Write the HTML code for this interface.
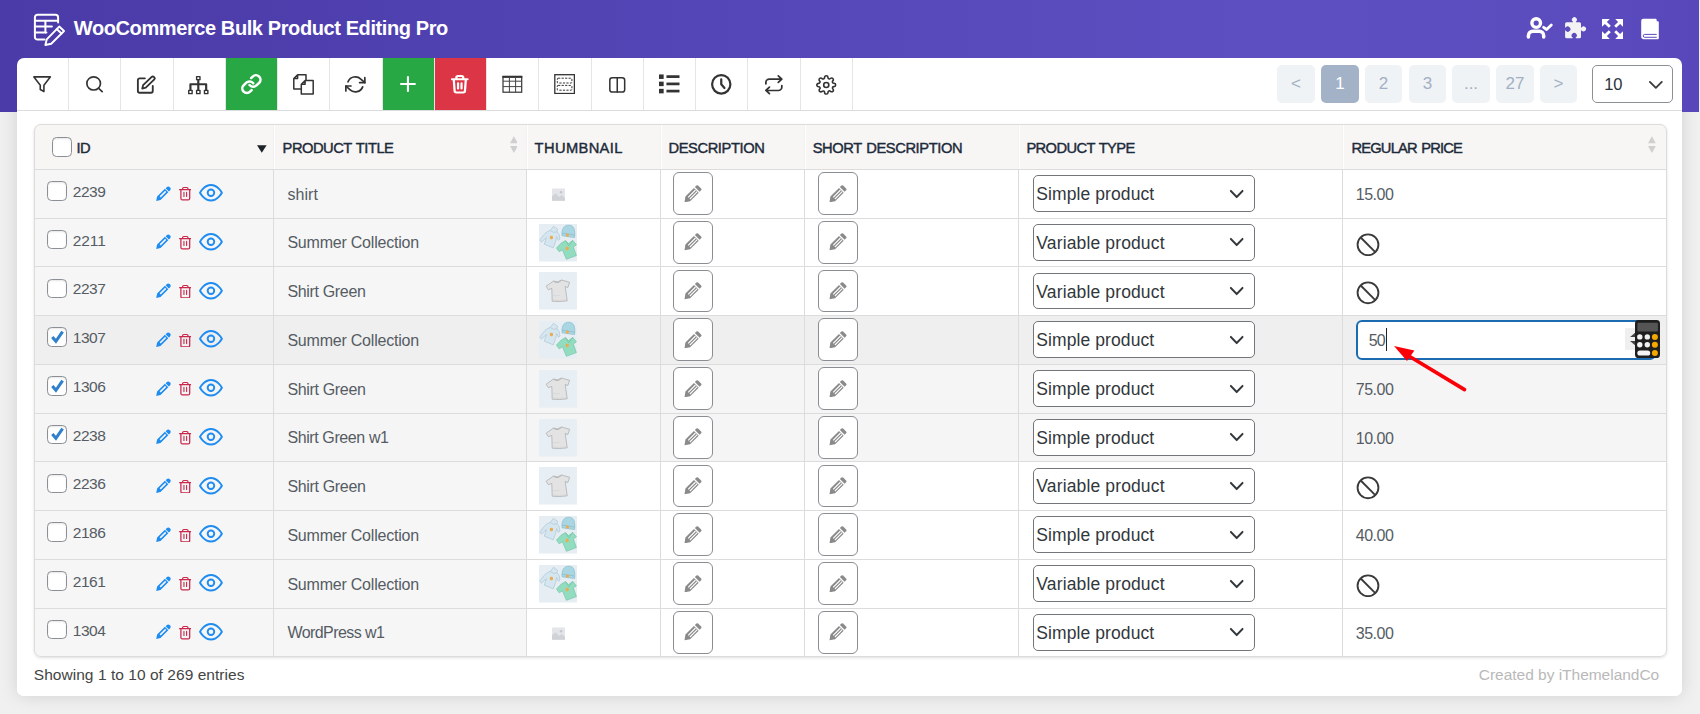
<!DOCTYPE html>
<html lang="en"><head><meta charset="utf-8"><title>WooCommerce Bulk Product Editing Pro</title>
<style>

*{box-sizing:border-box;margin:0;padding:0}
html,body{width:1700px;height:714px;overflow:hidden;background:#f0f0f1}
body{font-family:"Liberation Sans",sans-serif;-webkit-font-smoothing:antialiased}
#root{position:relative;width:1700px;height:714px;overflow:hidden}
#root>span{display:block}

</style></head>
<body>
<div id="root">
<div style="position:absolute;left:17px;top:58px;width:1665px;height:638px;background:#fff;border-radius:7px;box-shadow:0 0 18px rgba(0,0,0,.13);"></div>
<div style="position:absolute;left:0px;top:0px;width:1699px;height:111.6px;background:linear-gradient(90deg,#4a3ba8 0%,#4d3eac 15%,#5243b3 32%,#5849ba 52%,#5d4fc1 75%,#5c4dbf 90%,#5747bb 100%);"></div>
<div style="position:absolute;left:17px;top:58px;width:1665px;height:638px;background:#fff;border-radius:7px;"></div>
<svg style="position:absolute;left:32px;top:12px;" width="35" height="35" viewBox="0 0 35 35">
<g fill="none" stroke="#fff" stroke-width="2" stroke-linecap="round" stroke-linejoin="round">
<path d="M12.5 27.600H5.5a2.600 2.600 0 0 1-2.600-2.600V5.400A2.600 2.600 0 0 1 5.500 2.800h18a2.600 2.600 0 0 1 2.600 2.600V10.500"/>
<path d="M2.9 8.8h23.2M2.9 14.6h17M2.9 20.6h11.5M13.4 8.8v12"/>
<path d="M27.200 14.600l4.800 4.500-12.800 12.700-5.800 1.300 1.300-5.700z"/>
<path d="M24.700 17.100l4.800 4.500"/>
</g></svg>
<span style="position:absolute;top:17px;font-size:20px;line-height:22px;height:22px;font-weight:700;color:#fff;white-space:pre;left:73.80px;letter-spacing:-0.402px;">WooCommerce Bulk Product Editing Pro</span>
<svg style="position:absolute;left:1524px;top:15px;" width="30" height="26" viewBox="0 0 30 26">
<g fill="none" stroke="#fff" stroke-linecap="round" stroke-linejoin="round">
<circle cx="12.2" cy="8.1" r="4.3" stroke-width="3.4"/>
<path d="M4.400 22.100v-1.400a4.500 4.500 0 0 1 4.500-4.500h6.300a4.500 4.500 0 0 1 4.500 4.500v1.400" stroke-width="3.500"/>
<path d="M19.600 12.300l3 2.200 4.700-4.600" stroke-width="2.800"/>
</g></svg>
<svg style="position:absolute;left:1563px;top:15px;" width="26" height="26" viewBox="0 0 26 26">
<path fill="#f3f3f3" d="M3.600 7.250H9.900V6.700A2.450 2.450 0 1 1 12.900 6.700V7.250H16.500A1.500 1.500 0 0 1 18 8.750V12.400H18.600A2.450 2.450 0 1 1 18.600 15.400H18V21.700A1.500 1.500 0 0 1 16.500 23.200H12.700V22.600A2.580 2.580 0 1 0 9.700 22.600V23.200H3.600A1.500 1.500 0 0 1 2.100 21.700V15.600H2.700A2.580 2.580 0 1 0 2.700 12.600H2.100V8.750A1.500 1.500 0 0 1 3.600 7.250z"/></svg>
<svg style="position:absolute;left:1601px;top:18px;" width="23" height="22" viewBox="0 0 23 22">
<g fill="#fff"><path d="M1 1h7.800L5.900 3.900l3.900 3.900-2 2-3.900-3.900L1 8.800z"/><path d="M22 1v7.800L19.100 5.900l-3.900 3.900-2-2 3.900-3.900L14.200 1z"/><path d="M1 21v-7.800L3.900 16.100l3.900-3.900 2 2-3.900 3.900L8.800 21z"/><path d="M22 21h-7.800l2.900-2.900-3.900-3.900 2-2 3.900 3.900L22 13.200z"/></g></svg>
<svg style="position:absolute;left:1640px;top:18px;" width="21" height="23" viewBox="0 0 21 23">
<path fill="#fff" d="M3.200 .800h12.300a1.200 1.200 0 0 1 1.200 1.200v1.300h1.200a.900.900 0 0 1 .900.900v16a1.100 1.100 0 0 1-1.100 1.100H4A2.800 2.800 0 0 1 1.200 18.500V2.800A2 2 0 0 1 3.200 .800z"/>
<path fill="none" stroke="#5a4bbd" stroke-width="1" d="M16.700 16.400H4.700a1.450 1.450 0 0 0 0 2.900h12"/></svg>
<div style="position:absolute;left:17px;top:110px;width:1665px;height:1px;background:#dcdcde;"></div>
<div style="position:absolute;left:68px;top:58px;width:1px;height:52px;background:#e5e5e5;"></div>
<div style="position:absolute;left:120px;top:58px;width:1px;height:52px;background:#e5e5e5;"></div>
<div style="position:absolute;left:173px;top:58px;width:1px;height:52px;background:#e5e5e5;"></div>
<div style="position:absolute;left:225px;top:58px;width:1px;height:52px;background:#e5e5e5;"></div>
<div style="position:absolute;left:226px;top:58px;width:51px;height:52px;background:#28a745;"></div>
<div style="position:absolute;left:277px;top:58px;width:1px;height:52px;background:#e5e5e5;"></div>
<div style="position:absolute;left:329px;top:58px;width:1px;height:52px;background:#e5e5e5;"></div>
<div style="position:absolute;left:382px;top:58px;width:1px;height:52px;background:#e5e5e5;"></div>
<div style="position:absolute;left:383px;top:58px;width:51px;height:52px;background:#28a745;"></div>
<div style="position:absolute;left:434px;top:58px;width:1px;height:52px;background:#e5e5e5;"></div>
<div style="position:absolute;left:435px;top:58px;width:51px;height:52px;background:#dc3545;"></div>
<div style="position:absolute;left:486px;top:58px;width:1px;height:52px;background:#e5e5e5;"></div>
<div style="position:absolute;left:538px;top:58px;width:1px;height:52px;background:#e5e5e5;"></div>
<div style="position:absolute;left:591px;top:58px;width:1px;height:52px;background:#e5e5e5;"></div>
<div style="position:absolute;left:643px;top:58px;width:1px;height:52px;background:#e5e5e5;"></div>
<div style="position:absolute;left:695px;top:58px;width:1px;height:52px;background:#e5e5e5;"></div>
<div style="position:absolute;left:747px;top:58px;width:1px;height:52px;background:#e5e5e5;"></div>
<div style="position:absolute;left:800px;top:58px;width:1px;height:52px;background:#e5e5e5;"></div>
<div style="position:absolute;left:852px;top:58px;width:1px;height:52px;background:#e5e5e5;"></div>
<svg style="position:absolute;left:32.90px;top:76.20px;overflow:visible" width="18.20" height="16.70" viewBox="2 3 20 17.2" preserveAspectRatio="none"><g fill="none" stroke="#333" stroke-width="1.75" stroke-linecap="round" stroke-linejoin="round" ><path d="M3 4h18l-7 8.500v6.500l-4-2.200v-4.300z"/></g></svg>
<svg style="position:absolute;left:85.80px;top:76.40px;overflow:visible" width="17.00" height="16.50" viewBox="1 1 20 20" preserveAspectRatio="none"><g fill="none" stroke="#333" stroke-width="2" stroke-linecap="round" stroke-linejoin="round" ><circle cx="10" cy="10" r="8"/><path d="M15.800 15.800l4.200 4.200"/></g></svg>
<svg style="position:absolute;left:137.00px;top:75.80px;overflow:visible" width="18.40" height="17.60" viewBox="2 1.2 21 20.8" preserveAspectRatio="none"><g fill="none" stroke="#333" stroke-width="2.1" stroke-linecap="round" stroke-linejoin="round" ><path d="M11 4H5a2 2 0 0 0-2 2v13a2 2 0 0 0 2 2h13a2 2 0 0 0 2-2v-6"/><path d="M18.500 2.500a2.120 2.120 0 0 1 3 3L12 15l-4 1 1-4z"/></g></svg>
<svg style="position:absolute;left:188.30px;top:75.80px;overflow:visible" width="20.60" height="18.30" viewBox="1 1 22 22" preserveAspectRatio="none"><g fill="none" stroke="#333" stroke-width="1.5" stroke-linecap="round" stroke-linejoin="round" stroke-linejoin="miter" stroke-linecap="butt"><rect x="10.200" y="1.800" width="3.600" height="3.600"/><rect x="1.800" y="18.200" width="3.600" height="4"/><rect x="10.200" y="18.200" width="3.600" height="4"/><rect x="18.600" y="18.200" width="3.600" height="4"/><path d="M12 6v11.500M3.600 17.500v-6.500h16.800v6.500" stroke-width="2.300"/></g></svg>
<svg style="position:absolute;left:240.80px;top:74.20px;overflow:visible" width="20.80" height="20.20" viewBox="0.6 0.6 22.799999999999997 22.799999999999997" preserveAspectRatio="none"><g fill="none" stroke="#fff" stroke-width="2.8" stroke-linecap="round" stroke-linejoin="round" ><path d="M10 13a5 5 0 0 0 7.540.540l3-3a5 5 0 0 0-7.070-7.070l-1.720 1.710"/><path d="M14 11a5 5 0 0 0-7.540-.540l-3 3a5 5 0 0 0 7.070 7.070l1.710-1.710"/></g></svg>
<svg style="position:absolute;left:292.60px;top:73.50px;overflow:visible" width="21.00" height="20.70" viewBox="0 0 21 20.7" preserveAspectRatio="none"><g fill="none" stroke="#333" stroke-width="1.5" stroke-linecap="round" stroke-linejoin="round" stroke-linejoin="miter"><path d="M4.600.800h8.400v5.800M4.600.800L.800 4.600v10.300h7.500M.800 4.600h3.800V.800"/><path d="M12.100 6.500h8.100v13.400H8.300V10.300zM8.300 10.300h3.800V6.500" fill="#fff"/></g></svg>
<svg style="position:absolute;left:345.30px;top:76.00px;overflow:visible" width="20.70" height="16.70" viewBox="0 2 24 20" preserveAspectRatio="none"><g fill="none" stroke="#333" stroke-width="2" stroke-linecap="round" stroke-linejoin="round" ><path d="M23 4v6h-6M1 20v-6h6"/><path d="M3.510 9a9 9 0 0 1 14.850-3.360L23 10M1 14l4.640 4.360A9 9 0 0 0 20.490 15"/></g></svg>
<svg style="position:absolute;left:400.80px;top:77.40px;overflow:visible" width="13.90" height="14.00" viewBox="5 5 14 14" preserveAspectRatio="none"><g fill="none" stroke="#fff" stroke-width="2.1" stroke-linecap="round" stroke-linejoin="round" stroke-linecap="butt"><path d="M12 5v14M5 12h14"/></g></svg>
<svg style="position:absolute;left:451.30px;top:75.40px;overflow:visible" width="17.60" height="18.50" viewBox="1.8 0.8 20.4 22.4" preserveAspectRatio="none"><g fill="none" stroke="#fff" stroke-width="2.6" stroke-linecap="round" stroke-linejoin="round" ><path d="M3 6h18M19 6l-1 14a2 2 0 0 1-2 2H8a2 2 0 0 1-2-2L5 6M8 6V4a2 2 0 0 1 2-2h4a2 2 0 0 1 2 2v2M10 11v6M14 11v6"/></g></svg>
<svg style="position:absolute;left:502px;top:75px" width="21" height="19" viewBox="0 0 21 19"><g fill="none" stroke="#333" stroke-width="1.200"><rect x="1" y="1.400" width="18.700" height="15.800"/><path d="M.400 1.900h19.900" stroke-width="2"/><path d="M1 6.200h18.700M1 11.600h18.700M7.400 2v15M13.600 2v15" stroke="#444" stroke-width="1"/></g></svg>
<svg style="position:absolute;left:554px;top:74px" width="21" height="20" viewBox="0 0 21 20"><g fill="none" stroke="#333"><rect x=".800" y=".700" width="19.600" height="18.800" stroke-width="1.300"/><rect x="3.300" y="4.200" width="14.600" height="4.800" rx=".800" stroke-width="1" stroke-dasharray="2.200 1.300"/><rect x="3.300" y="11.400" width="14.600" height="4.800" rx=".800" stroke-width="1" stroke-dasharray="2.200 1.300"/></g></svg>
<svg style="position:absolute;left:608.70px;top:77.00px;overflow:visible" width="16.50" height="15.80" viewBox="2 2 20 20" preserveAspectRatio="none"><g fill="none" stroke="#333" stroke-width="1.85" stroke-linecap="round" stroke-linejoin="round" ><rect x="3" y="3" width="18" height="18" rx="3"/><path d="M12 3v18"/></g></svg>
<svg style="position:absolute;left:658.80px;top:74.20px;overflow:visible" width="20.50" height="19.80" viewBox="1 1 22 22" preserveAspectRatio="none"><g fill="#333" stroke="none" stroke-width="0" stroke-linecap="round" stroke-linejoin="round" ><rect x="1" y="1.500" width="5" height="5"/><rect x="1" y="9.500" width="5" height="5"/><rect x="1" y="17.500" width="5" height="5"/><rect x="9" y="2.400" width="14" height="3"/><rect x="9" y="10.500" width="14" height="3"/><rect x="9" y="18.500" width="14" height="3"/></g></svg>
<svg style="position:absolute;left:711.30px;top:73.50px;overflow:visible" width="20.50" height="20.70" viewBox="0.8 0.8 22.4 22.4" preserveAspectRatio="none"><g fill="none" stroke="#333" stroke-width="2.4" stroke-linecap="round" stroke-linejoin="round" ><circle cx="12" cy="12" r="10"/><path d="M12 6.500V12l3.500 4"/></g></svg>
<svg style="position:absolute;left:764.70px;top:74.70px;overflow:visible" width="17.70" height="19.50" viewBox="2 0 20 24" preserveAspectRatio="none"><g fill="none" stroke="#333" stroke-width="2" stroke-linecap="round" stroke-linejoin="round" ><path d="M17 1l4 4-4 4M3 11V9a4 4 0 0 1 4-4h14M7 23l-4-4 4-4M21 13v2a4 4 0 0 1-4 4H3"/></g></svg>
<svg style="position:absolute;left:815.80px;top:74.60px;overflow:visible" width="20.50" height="19.90" viewBox="0 0 24 24" preserveAspectRatio="none"><g fill="none" stroke="#333" stroke-width="1.9" stroke-linecap="round" stroke-linejoin="round" ><circle cx="12" cy="12" r="3"/><path d="M19.400 15a1.650 1.650 0 0 0 .330 1.820l.060.060a2 2 0 0 1 0 2.830 2 2 0 0 1-2.830 0l-.060-.060a1.650 1.650 0 0 0-1.820-.330 1.650 1.650 0 0 0-1 1.510V21a2 2 0 0 1-2 2 2 2 0 0 1-2-2v-.090A1.650 1.650 0 0 0 9 19.400a1.650 1.650 0 0 0-1.820.330l-.060.060a2 2 0 0 1-2.830 0 2 2 0 0 1 0-2.830l.060-.060a1.650 1.650 0 0 0 .330-1.820 1.650 1.650 0 0 0-1.510-1H3a2 2 0 0 1-2-2 2 2 0 0 1 2-2h.090A1.650 1.650 0 0 0 4.600 9a1.650 1.650 0 0 0-.330-1.820l-.060-.060a2 2 0 0 1 0-2.830 2 2 0 0 1 2.830 0l.060.060a1.650 1.650 0 0 0 1.820.330H9a1.650 1.650 0 0 0 1-1.510V3a2 2 0 0 1 2-2 2 2 0 0 1 2 2v.090a1.650 1.650 0 0 0 1 1.510 1.650 1.650 0 0 0 1.820-.330l.060-.060a2 2 0 0 1 2.830 0 2 2 0 0 1 0 2.830l-.060.060a1.650 1.650 0 0 0-.330 1.820V9a1.650 1.650 0 0 0 1.510 1H21a2 2 0 0 1 2 2 2 2 0 0 1-2 2h-.090a1.650 1.650 0 0 0-1.510 1z"/></g></svg>
<div style="position:absolute;left:1277px;top:65px;width:38px;height:38px;background:#eff3f6;border-radius:5px;"></div>
<div style="position:absolute;left:1277px;top:65px;width:38px;height:38px;line-height:37px;text-align:center;font-size:17px;color:#a3afc2">&lt;</div>
<div style="position:absolute;left:1321px;top:65px;width:38px;height:38px;background:#a4b2c8;border-radius:5px;"></div>
<div style="position:absolute;left:1321px;top:65px;width:38px;height:38px;line-height:37px;text-align:center;font-size:17px;color:#fff">1</div>
<div style="position:absolute;left:1365px;top:65px;width:37px;height:38px;background:#eff3f6;border-radius:5px;"></div>
<div style="position:absolute;left:1365px;top:65px;width:37px;height:38px;line-height:37px;text-align:center;font-size:17px;color:#a3afc2">2</div>
<div style="position:absolute;left:1409px;top:65px;width:37px;height:38px;background:#eff3f6;border-radius:5px;"></div>
<div style="position:absolute;left:1409px;top:65px;width:37px;height:38px;line-height:37px;text-align:center;font-size:17px;color:#a3afc2">3</div>
<div style="position:absolute;left:1452px;top:65px;width:38px;height:38px;background:#eff3f6;border-radius:5px;"></div>
<div style="position:absolute;left:1452px;top:65px;width:38px;height:38px;line-height:37px;text-align:center;font-size:17px;color:#a3afc2">...</div>
<div style="position:absolute;left:1496px;top:65px;width:38px;height:38px;background:#eff3f6;border-radius:5px;"></div>
<div style="position:absolute;left:1496px;top:65px;width:38px;height:38px;line-height:37px;text-align:center;font-size:17px;color:#a3afc2">27</div>
<div style="position:absolute;left:1540px;top:65px;width:37px;height:38px;background:#eff3f6;border-radius:5px;"></div>
<div style="position:absolute;left:1540px;top:65px;width:37px;height:38px;line-height:37px;text-align:center;font-size:17px;color:#a3afc2">&gt;</div>
<div style="position:absolute;left:1592.2px;top:64.8px;width:80.6px;height:37.9px;background:#fff;border:1px solid #8c8f94;border-radius:5px;"></div>
<span style="position:absolute;top:75px;font-size:16.5px;line-height:18px;height:18px;font-weight:400;color:#2c3338;white-space:pre;left:1604.20px;">10</span>
<svg style="position:absolute;left:1649.30px;top:81.00px;overflow:visible" width="13.70" height="7.70" viewBox="2.8 6.8 18.4 10.399999999999999" preserveAspectRatio="none"><g fill="none" stroke="#3c3c3c" stroke-width="2.5" stroke-linecap="round" stroke-linejoin="round" stroke-linecap="butt" stroke-linejoin="miter"><path d="M4 8l8 8 8-8"/></g></svg>
<div style="position:absolute;left:34px;top:124px;width:1633px;height:533px;background:#fff;border-radius:7px;box-shadow:0 1px 3px rgba(0,0,0,.13);"></div>
<div style="position:absolute;left:34px;top:124px;width:1633px;height:45px;background:#f7f6f5;border-radius:7px 7px 0 0;"></div>
<div style="position:absolute;left:34px;top:169px;width:492px;height:49px;background:#f6f6f6;"></div>
<div style="position:absolute;left:34px;top:218px;width:492px;height:48px;background:#f6f6f6;"></div>
<div style="position:absolute;left:34px;top:266px;width:492px;height:49px;background:#f6f6f6;"></div>
<div style="position:absolute;left:34px;top:315px;width:1633px;height:49px;background:#efefef;"></div>
<div style="position:absolute;left:34px;top:364px;width:1633px;height:49px;background:#f5f5f5;"></div>
<div style="position:absolute;left:34px;top:413px;width:1633px;height:48px;background:#f5f5f5;"></div>
<div style="position:absolute;left:34px;top:461px;width:492px;height:49px;background:#f6f6f6;"></div>
<div style="position:absolute;left:34px;top:510px;width:492px;height:49px;background:#f6f6f6;"></div>
<div style="position:absolute;left:34px;top:559px;width:492px;height:49px;background:#f6f6f6;"></div>
<div style="position:absolute;left:34px;top:608px;width:492px;height:48px;background:#f6f6f6;border-radius:0 0 0 7px;"></div>
<div style="position:absolute;left:34px;top:169px;width:1633px;height:1px;background:#dcdcdc;"></div>
<div style="position:absolute;left:34px;top:218px;width:1633px;height:1px;background:#dcdcdc;"></div>
<div style="position:absolute;left:34px;top:266px;width:1633px;height:1px;background:#dcdcdc;"></div>
<div style="position:absolute;left:34px;top:315px;width:1633px;height:1px;background:#dcdcdc;"></div>
<div style="position:absolute;left:34px;top:364px;width:1633px;height:1px;background:#dcdcdc;"></div>
<div style="position:absolute;left:34px;top:413px;width:1633px;height:1px;background:#dcdcdc;"></div>
<div style="position:absolute;left:34px;top:461px;width:1633px;height:1px;background:#dcdcdc;"></div>
<div style="position:absolute;left:34px;top:510px;width:1633px;height:1px;background:#dcdcdc;"></div>
<div style="position:absolute;left:34px;top:559px;width:1633px;height:1px;background:#dcdcdc;"></div>
<div style="position:absolute;left:34px;top:608px;width:1633px;height:1px;background:#dcdcdc;"></div>
<div style="position:absolute;left:273px;top:125px;width:1px;height:44px;background:#f2f1f0;"></div>
<div style="position:absolute;left:274px;top:125px;width:1px;height:44px;background:#fff;"></div>
<div style="position:absolute;left:273px;top:169px;width:1px;height:487px;background:#dcdcdc;"></div>
<div style="position:absolute;left:526px;top:125px;width:1px;height:44px;background:#f2f1f0;"></div>
<div style="position:absolute;left:527px;top:125px;width:1px;height:44px;background:#fff;"></div>
<div style="position:absolute;left:526px;top:169px;width:1px;height:487px;background:#dcdcdc;"></div>
<div style="position:absolute;left:660px;top:125px;width:1px;height:44px;background:#f2f1f0;"></div>
<div style="position:absolute;left:661px;top:125px;width:1px;height:44px;background:#fff;"></div>
<div style="position:absolute;left:660px;top:169px;width:1px;height:487px;background:#dcdcdc;"></div>
<div style="position:absolute;left:804px;top:125px;width:1px;height:44px;background:#f2f1f0;"></div>
<div style="position:absolute;left:805px;top:125px;width:1px;height:44px;background:#fff;"></div>
<div style="position:absolute;left:804px;top:169px;width:1px;height:487px;background:#dcdcdc;"></div>
<div style="position:absolute;left:1018px;top:125px;width:1px;height:44px;background:#f2f1f0;"></div>
<div style="position:absolute;left:1019px;top:125px;width:1px;height:44px;background:#fff;"></div>
<div style="position:absolute;left:1018px;top:169px;width:1px;height:487px;background:#dcdcdc;"></div>
<div style="position:absolute;left:1342px;top:125px;width:1px;height:44px;background:#f2f1f0;"></div>
<div style="position:absolute;left:1343px;top:125px;width:1px;height:44px;background:#fff;"></div>
<div style="position:absolute;left:1342px;top:169px;width:1px;height:487px;background:#dcdcdc;"></div>
<div style="position:absolute;left:34px;top:124px;width:1633px;height:533px;border:1px solid #dcdcdc;border-radius:7px;"></div>
<div style="position:absolute;left:52.2px;top:137.1px;width:19.6px;height:19.6px;background:#fff;border:1px solid #8c8f94;border-radius:4.500px;box-shadow:inset 0 1px 2px rgba(0,0,0,.1);"></div>
<span style="position:absolute;top:140px;font-size:14.7px;line-height:16px;height:16px;font-weight:400;color:#1d2a3a;white-space:pre;left:76.40px;letter-spacing:-0.388px;-webkit-text-stroke:0.42px #1d2a3a;word-spacing:1px;">ID</span>
<svg style="position:absolute;left:257.300px;top:144.600px" width="9.600" height="8" viewBox="0 0 10 8"><path d="M0 0h10L5 8z" fill="#1d2327"/></svg>
<span style="position:absolute;top:140px;font-size:14.7px;line-height:16px;height:16px;font-weight:400;color:#1d2a3a;white-space:pre;left:282.60px;letter-spacing:-0.489px;-webkit-text-stroke:0.42px #1d2a3a;word-spacing:1px;">PRODUCT TITLE</span>
<span style="position:absolute;top:140px;font-size:14.7px;line-height:16px;height:16px;font-weight:400;color:#1d2a3a;white-space:pre;left:534.60px;letter-spacing:0.366px;-webkit-text-stroke:0.42px #1d2a3a;word-spacing:1px;">THUMBNAIL</span>
<span style="position:absolute;top:140px;font-size:14.7px;line-height:16px;height:16px;font-weight:400;color:#1d2a3a;white-space:pre;left:668.50px;letter-spacing:-0.408px;-webkit-text-stroke:0.42px #1d2a3a;word-spacing:1px;">DESCRIPTION</span>
<span style="position:absolute;top:140px;font-size:14.7px;line-height:16px;height:16px;font-weight:400;color:#1d2a3a;white-space:pre;left:812.70px;letter-spacing:-0.403px;-webkit-text-stroke:0.42px #1d2a3a;word-spacing:1px;">SHORT DESCRIPTION</span>
<span style="position:absolute;top:140px;font-size:14.7px;line-height:16px;height:16px;font-weight:400;color:#1d2a3a;white-space:pre;left:1026.40px;letter-spacing:-0.603px;-webkit-text-stroke:0.42px #1d2a3a;word-spacing:1px;">PRODUCT TYPE</span>
<span style="position:absolute;top:140px;font-size:14.7px;line-height:16px;height:16px;font-weight:400;color:#1d2a3a;white-space:pre;left:1351.40px;letter-spacing:-0.790px;-webkit-text-stroke:0.42px #1d2a3a;word-spacing:1px;">REGULAR PRICE</span>
<svg style="position:absolute;left:509.6px;top:136px" width="7.800" height="17.200" viewBox="0 0 8 17"><path d="M4 0l4 7H0zM4 17l4-7H0z" fill="#cfcfcf"/></svg>
<svg style="position:absolute;left:1648.4px;top:136px" width="7.800" height="17.200" viewBox="0 0 8 17"><path d="M4 0l4 7H0zM4 17l4-7H0z" fill="#cfcfcf"/></svg>
<div style="position:absolute;left:47px;top:181.1px;width:19.6px;height:19.6px;background:#fff;border:1px solid #8c8f94;border-radius:4.500px;box-shadow:inset 0 1px 2px rgba(0,0,0,.1);"></div>
<span style="position:absolute;top:183px;font-size:15.5px;line-height:17px;height:17px;font-weight:400;color:#555c64;white-space:pre;left:72.70px;letter-spacing:-0.428px;">2239</span>
<svg style="position:absolute;left:155.9px;top:185.70px" width="15.3" height="15.2" viewBox="0 0 15.3 15.2"><path fill="#1e8cf0" fill-rule="evenodd" d="M.2 15 1.100 10.600 8.890 2.810 12.290 6.210 4.500 14zM3.660 10.380 9.170 4.870 10.230 5.930 4.720 11.440z"/><path fill="#1e8cf0" d="M9.600 2.200l1.060-1.060a2.350 2.350 0 0 1 3.320 3.320l-1.060 1.060z"/></svg>
<svg style="position:absolute;left:178.5px;top:186.40px" width="12.6" height="14.6" viewBox="0 0 12.6 14.6"><g fill="none" stroke="#c9284b" stroke-width="1.250" stroke-linecap="round" stroke-linejoin="round"><path d="M.600 3.700H12M3.600 3.700V2.700a1.200 1.200 0 0 1 1.200-1.200h3a1.200 1.200 0 0 1 1.200 1.200V3.700M1.900 3.700v8.700a1.500 1.500 0 0 0 1.500 1.500h5.800a1.500 1.500 0 0 0 1.500-1.500V3.700"/><path d="M4.950 6.400v4.100M7.600 6.400v4.100" stroke-width="1.100"/></g></svg>
<svg style="position:absolute;left:198.80px;top:184.00px;overflow:visible" width="23.90" height="17.50" viewBox="0 3 24 18" preserveAspectRatio="none"><g fill="none" stroke="#1e8cf0" stroke-width="1.9" stroke-linecap="round" stroke-linejoin="round" ><path d="M1 12s4-8 11-8 11 8 11 8-4 8-11 8-11-8-11-8z"/><circle cx="12" cy="12" r="3.300"/></g></svg>
<span style="position:absolute;top:186px;font-size:16px;line-height:17px;height:17px;font-weight:400;color:#555c64;white-space:pre;left:287.40px;letter-spacing:0.091px;">shirt</span>
<svg style="position:absolute;left:551.80px;top:187.90px" width="13.400" height="13.200" viewBox="0 0 14 13"><rect width="14" height="13" rx="1" fill="#e3e5e8"/><path d="M0 13V8.500l3.500-3.500 4 4 2.500-2 4 3.500V13z" fill="#cfd2d6"/><circle cx="9.500" cy="4" r="1.300" fill="#c4c7cc"/></svg>
<div style="position:absolute;left:673.2px;top:172.1px;width:39.7px;height:42.8px;background:#fff;border:1px solid #8a8d91;border-radius:6px;"></div>
<svg style="position:absolute;left:684.00px;top:184.60px" width="18" height="17.500" viewBox="0 0 18 17.500"><path fill="#8a8a8a" d="M12.400.600a1.200 1.200 0 0 1 1.700 0l3 3a1.200 1.200 0 0 1 0 1.700L15.600 6.800 10.900 2.100zM10 3l4.700 4.700-8.600 8.600-5.600 1 .900-5.700z"/><path stroke="#fff" stroke-width="1.100" d="M4.200 12.300l7.300-7.300M5.900 14l7.300-7.300" fill="none"/></svg>
<div style="position:absolute;left:818.1px;top:172.1px;width:39.7px;height:42.8px;background:#fff;border:1px solid #8a8d91;border-radius:6px;"></div>
<svg style="position:absolute;left:828.90px;top:184.60px" width="18" height="17.500" viewBox="0 0 18 17.500"><path fill="#8a8a8a" d="M12.400.600a1.200 1.200 0 0 1 1.700 0l3 3a1.200 1.200 0 0 1 0 1.700L15.600 6.800 10.900 2.100zM10 3l4.700 4.700-8.600 8.600-5.600 1 .900-5.700z"/><path stroke="#fff" stroke-width="1.100" d="M4.200 12.300l7.300-7.300M5.900 14l7.300-7.300" fill="none"/></svg>
<div style="position:absolute;left:1033.1px;top:175.0px;width:222px;height:36.8px;background:#fff;border:1px solid #72767b;border-radius:5px;"></div>
<span style="position:absolute;top:184px;font-size:17.5px;line-height:20px;height:20px;font-weight:400;color:#32373c;white-space:pre;left:1036.30px;letter-spacing:0.090px;">Simple product</span>
<svg style="position:absolute;left:1230.10px;top:189.70px;overflow:visible" width="13.40" height="8.00" viewBox="2.8 6.8 18.4 10.399999999999999" preserveAspectRatio="none"><g fill="none" stroke="#32373c" stroke-width="2.6" stroke-linecap="round" stroke-linejoin="round" stroke-linecap="butt" stroke-linejoin="miter"><path d="M4 8l8 8 8-8"/></g></svg>
<span style="position:absolute;top:186px;font-size:16px;line-height:17px;height:17px;font-weight:400;color:#555c64;white-space:pre;left:1355.80px;letter-spacing:-0.487px;">15.00</span>
<div style="position:absolute;left:47px;top:229.8px;width:19.6px;height:19.6px;background:#fff;border:1px solid #8c8f94;border-radius:4.500px;box-shadow:inset 0 1px 2px rgba(0,0,0,.1);"></div>
<span style="position:absolute;top:232px;font-size:15.5px;line-height:17px;height:17px;font-weight:400;color:#555c64;white-space:pre;left:72.70px;letter-spacing:-0.048px;">2211</span>
<svg style="position:absolute;left:155.9px;top:234.45px" width="15.3" height="15.2" viewBox="0 0 15.3 15.2"><path fill="#1e8cf0" fill-rule="evenodd" d="M.2 15 1.100 10.600 8.890 2.810 12.290 6.210 4.500 14zM3.660 10.380 9.170 4.870 10.230 5.930 4.720 11.440z"/><path fill="#1e8cf0" d="M9.600 2.200l1.060-1.060a2.350 2.350 0 0 1 3.320 3.320l-1.060 1.060z"/></svg>
<svg style="position:absolute;left:178.5px;top:235.15px" width="12.6" height="14.6" viewBox="0 0 12.6 14.6"><g fill="none" stroke="#c9284b" stroke-width="1.250" stroke-linecap="round" stroke-linejoin="round"><path d="M.600 3.700H12M3.600 3.700V2.700a1.200 1.200 0 0 1 1.200-1.200h3a1.200 1.200 0 0 1 1.200 1.200V3.700M1.900 3.700v8.700a1.500 1.500 0 0 0 1.500 1.500h5.800a1.500 1.500 0 0 0 1.500-1.500V3.700"/><path d="M4.950 6.400v4.100M7.600 6.400v4.100" stroke-width="1.100"/></g></svg>
<svg style="position:absolute;left:198.80px;top:232.75px;overflow:visible" width="23.90" height="17.50" viewBox="0 3 24 18" preserveAspectRatio="none"><g fill="none" stroke="#1e8cf0" stroke-width="1.9" stroke-linecap="round" stroke-linejoin="round" ><path d="M1 12s4-8 11-8 11 8 11 8-4 8-11 8-11-8-11-8z"/><circle cx="12" cy="12" r="3.300"/></g></svg>
<span style="position:absolute;top:234px;font-size:16px;line-height:17px;height:17px;font-weight:400;color:#555c64;white-space:pre;left:287.40px;letter-spacing:-0.216px;">Summer Collection</span>
<svg style="position:absolute;left:539px;top:224px" width="38" height="37.5" viewBox="0 0 38 38" preserveAspectRatio="none"><rect width="38" height="38" fill="#e6eef4"/>
<path d="M14.5 2.3L18.6 5.4 18 8 20 10 21 15.200 19.400 16.600 17.600 12.800 16.600 18 14.200 24.200 5.300 20.400 7.400 13.800 2.400 18.400 .800 16.200 6 9.500 8.600 7.600 11.200 6.600z" fill="#d5e6f0" stroke="#a3c0cf" stroke-width=".600" stroke-linejoin="round"/>
<path d="M11.200 6.600Q14.500 9.600 18 8" fill="none" stroke="#a3c0cf" stroke-width=".600"/>
<path d="M23 12C22.400 5 25 1 30 1.200 34.500 1.400 36.600 5 35.600 13.800z" fill="#a9d6e2" stroke="#80b7c6" stroke-width=".600"/>
<path d="M23.100 9.300L35.900 11.200" fill="none" stroke="#80b7c6" stroke-width=".600"/>
<path d="M22.500 19L26.500 16.800 29.500 19.800 33.800 16.600 37.400 21 34.400 23.400 37.400 32 27.400 35.800 23.400 26.200 20.200 28.200 17.400 24.400z" fill="#92dcc0" stroke="#6cbf9f" stroke-width=".600" stroke-linejoin="round"/>
<path d="M26.500 16.800L29.800 22.200 33.800 16.600" fill="none" stroke="#6cbf9f" stroke-width=".600"/>
<rect x="10.800" y="12" width="3.200" height="3.400" rx="1.200" fill="#e9ad55"/><rect x="26.900" y="9.600" width="3" height="3" rx="1.200" fill="#e9ad55"/><rect x="26.500" y="23" width="3.300" height="3.500" rx="1.300" fill="#e9ad55"/></svg>
<div style="position:absolute;left:673.2px;top:220.8px;width:39.7px;height:42.8px;background:#fff;border:1px solid #8a8d91;border-radius:6px;"></div>
<svg style="position:absolute;left:684.00px;top:233.30px" width="18" height="17.500" viewBox="0 0 18 17.500"><path fill="#8a8a8a" d="M12.400.600a1.200 1.200 0 0 1 1.700 0l3 3a1.200 1.200 0 0 1 0 1.700L15.600 6.800 10.900 2.100zM10 3l4.700 4.700-8.600 8.600-5.600 1 .900-5.700z"/><path stroke="#fff" stroke-width="1.100" d="M4.200 12.300l7.300-7.300M5.900 14l7.300-7.300" fill="none"/></svg>
<div style="position:absolute;left:818.1px;top:220.8px;width:39.7px;height:42.8px;background:#fff;border:1px solid #8a8d91;border-radius:6px;"></div>
<svg style="position:absolute;left:828.90px;top:233.30px" width="18" height="17.500" viewBox="0 0 18 17.500"><path fill="#8a8a8a" d="M12.400.600a1.200 1.200 0 0 1 1.700 0l3 3a1.200 1.200 0 0 1 0 1.700L15.600 6.800 10.900 2.100zM10 3l4.700 4.700-8.600 8.600-5.600 1 .900-5.700z"/><path stroke="#fff" stroke-width="1.100" d="M4.200 12.300l7.300-7.300M5.900 14l7.300-7.300" fill="none"/></svg>
<div style="position:absolute;left:1033.1px;top:223.8px;width:222px;height:36.8px;background:#fff;border:1px solid #72767b;border-radius:5px;"></div>
<span style="position:absolute;top:233px;font-size:17.5px;line-height:20px;height:20px;font-weight:400;color:#32373c;white-space:pre;left:1036.30px;letter-spacing:0.137px;">Variable product</span>
<svg style="position:absolute;left:1230.10px;top:238.45px;overflow:visible" width="13.40" height="8.00" viewBox="2.8 6.8 18.4 10.399999999999999" preserveAspectRatio="none"><g fill="none" stroke="#32373c" stroke-width="2.6" stroke-linecap="round" stroke-linejoin="round" stroke-linecap="butt" stroke-linejoin="miter"><path d="M4 8l8 8 8-8"/></g></svg>
<svg style="position:absolute;left:1356.400px;top:232.55px" width="24" height="23.600" viewBox="0 0 24 24"><circle cx="12" cy="12" r="10.600" fill="none" stroke="#3a3a3a" stroke-width="1.900"/><path d="M4.600 4.600l14.800 14.800" stroke="#3a3a3a" stroke-width="1.900"/></svg>
<div style="position:absolute;left:47px;top:278.6px;width:19.6px;height:19.6px;background:#fff;border:1px solid #8c8f94;border-radius:4.500px;box-shadow:inset 0 1px 2px rgba(0,0,0,.1);"></div>
<span style="position:absolute;top:280px;font-size:15.5px;line-height:17px;height:17px;font-weight:400;color:#555c64;white-space:pre;left:72.70px;letter-spacing:-0.428px;">2237</span>
<svg style="position:absolute;left:155.9px;top:283.20px" width="15.3" height="15.2" viewBox="0 0 15.3 15.2"><path fill="#1e8cf0" fill-rule="evenodd" d="M.2 15 1.100 10.600 8.890 2.810 12.290 6.210 4.500 14zM3.660 10.380 9.170 4.870 10.230 5.930 4.720 11.440z"/><path fill="#1e8cf0" d="M9.600 2.200l1.060-1.060a2.350 2.350 0 0 1 3.320 3.320l-1.060 1.060z"/></svg>
<svg style="position:absolute;left:178.5px;top:283.90px" width="12.6" height="14.6" viewBox="0 0 12.6 14.6"><g fill="none" stroke="#c9284b" stroke-width="1.250" stroke-linecap="round" stroke-linejoin="round"><path d="M.600 3.700H12M3.600 3.700V2.700a1.200 1.200 0 0 1 1.200-1.200h3a1.200 1.200 0 0 1 1.200 1.200V3.700M1.900 3.700v8.700a1.500 1.500 0 0 0 1.500 1.500h5.800a1.500 1.500 0 0 0 1.500-1.500V3.700"/><path d="M4.950 6.400v4.100M7.600 6.400v4.100" stroke-width="1.100"/></g></svg>
<svg style="position:absolute;left:198.80px;top:281.50px;overflow:visible" width="23.90" height="17.50" viewBox="0 3 24 18" preserveAspectRatio="none"><g fill="none" stroke="#1e8cf0" stroke-width="1.9" stroke-linecap="round" stroke-linejoin="round" ><path d="M1 12s4-8 11-8 11 8 11 8-4 8-11 8-11-8-11-8z"/><circle cx="12" cy="12" r="3.300"/></g></svg>
<span style="position:absolute;top:283px;font-size:16px;line-height:17px;height:17px;font-weight:400;color:#555c64;white-space:pre;left:287.40px;letter-spacing:-0.331px;">Shirt Green</span>
<svg style="position:absolute;left:539px;top:272px" width="38" height="37.5" viewBox="0 0 38 38" preserveAspectRatio="none"><rect width="38" height="38" fill="#e7eef4"/>
<path d="M14.500 9.200Q18.500 11.200 22.500 8.200L30.600 10.400 28.800 15.800 26.200 14.600 28.200 29.200Q20.500 30.500 13.200 29.600L12.800 16.600 9.400 18 7.100 14.400z" fill="#e3e3e3" stroke="#a9a9a9" stroke-width=".700" stroke-linejoin="round"/>
<path d="M14.500 9.200Q18.500 12.600 22.500 8.200" fill="none" stroke="#b0b0b0" stroke-width="1"/>
<path d="M14 23.500q3 1 6.500.300M13.600 28.300q7 1.100 14.300-.100" fill="none" stroke="#cfcfcf" stroke-width=".600"/></svg>
<div style="position:absolute;left:673.2px;top:269.6px;width:39.7px;height:42.8px;background:#fff;border:1px solid #8a8d91;border-radius:6px;"></div>
<svg style="position:absolute;left:684.00px;top:282.10px" width="18" height="17.500" viewBox="0 0 18 17.500"><path fill="#8a8a8a" d="M12.400.600a1.200 1.200 0 0 1 1.700 0l3 3a1.200 1.200 0 0 1 0 1.700L15.600 6.800 10.900 2.100zM10 3l4.700 4.700-8.600 8.600-5.600 1 .900-5.700z"/><path stroke="#fff" stroke-width="1.100" d="M4.200 12.300l7.300-7.300M5.900 14l7.300-7.300" fill="none"/></svg>
<div style="position:absolute;left:818.1px;top:269.6px;width:39.7px;height:42.8px;background:#fff;border:1px solid #8a8d91;border-radius:6px;"></div>
<svg style="position:absolute;left:828.90px;top:282.10px" width="18" height="17.500" viewBox="0 0 18 17.500"><path fill="#8a8a8a" d="M12.400.600a1.200 1.200 0 0 1 1.700 0l3 3a1.200 1.200 0 0 1 0 1.700L15.600 6.800 10.900 2.100zM10 3l4.700 4.700-8.600 8.600-5.600 1 .900-5.700z"/><path stroke="#fff" stroke-width="1.100" d="M4.200 12.300l7.300-7.300M5.900 14l7.300-7.300" fill="none"/></svg>
<div style="position:absolute;left:1033.1px;top:272.5px;width:222px;height:36.8px;background:#fff;border:1px solid #72767b;border-radius:5px;"></div>
<span style="position:absolute;top:282px;font-size:17.5px;line-height:20px;height:20px;font-weight:400;color:#32373c;white-space:pre;left:1036.30px;letter-spacing:0.137px;">Variable product</span>
<svg style="position:absolute;left:1230.10px;top:287.20px;overflow:visible" width="13.40" height="8.00" viewBox="2.8 6.8 18.4 10.399999999999999" preserveAspectRatio="none"><g fill="none" stroke="#32373c" stroke-width="2.6" stroke-linecap="round" stroke-linejoin="round" stroke-linecap="butt" stroke-linejoin="miter"><path d="M4 8l8 8 8-8"/></g></svg>
<svg style="position:absolute;left:1356.400px;top:281.30px" width="24" height="23.600" viewBox="0 0 24 24"><circle cx="12" cy="12" r="10.600" fill="none" stroke="#3a3a3a" stroke-width="1.900"/><path d="M4.600 4.600l14.800 14.800" stroke="#3a3a3a" stroke-width="1.900"/></svg>
<div style="position:absolute;left:47px;top:327.3px;width:19.6px;height:19.6px;background:#fff;border:1px solid #8c8f94;border-radius:4.500px;box-shadow:inset 0 1px 2px rgba(0,0,0,.1);"></div>
<svg style="position:absolute;left:49.500px;top:328.85px" width="15" height="16" viewBox="0 0 15 16"><path d="M2.300 8l3.600 4.300L12.600 2.700" fill="none" stroke="#3080cc" stroke-width="3.100"/></svg>
<span style="position:absolute;top:329px;font-size:15.5px;line-height:17px;height:17px;font-weight:400;color:#555c64;white-space:pre;left:72.70px;letter-spacing:-0.428px;">1307</span>
<svg style="position:absolute;left:155.9px;top:331.95px" width="15.3" height="15.2" viewBox="0 0 15.3 15.2"><path fill="#1e8cf0" fill-rule="evenodd" d="M.2 15 1.100 10.600 8.890 2.810 12.290 6.210 4.500 14zM3.660 10.380 9.170 4.870 10.230 5.930 4.720 11.440z"/><path fill="#1e8cf0" d="M9.600 2.200l1.060-1.060a2.350 2.350 0 0 1 3.320 3.320l-1.060 1.060z"/></svg>
<svg style="position:absolute;left:178.5px;top:332.65px" width="12.6" height="14.6" viewBox="0 0 12.6 14.6"><g fill="none" stroke="#c9284b" stroke-width="1.250" stroke-linecap="round" stroke-linejoin="round"><path d="M.600 3.700H12M3.600 3.700V2.700a1.200 1.200 0 0 1 1.200-1.200h3a1.200 1.200 0 0 1 1.200 1.200V3.700M1.900 3.700v8.700a1.500 1.500 0 0 0 1.500 1.500h5.800a1.500 1.500 0 0 0 1.500-1.500V3.700"/><path d="M4.950 6.400v4.100M7.600 6.400v4.100" stroke-width="1.100"/></g></svg>
<svg style="position:absolute;left:198.80px;top:330.25px;overflow:visible" width="23.90" height="17.50" viewBox="0 3 24 18" preserveAspectRatio="none"><g fill="none" stroke="#1e8cf0" stroke-width="1.9" stroke-linecap="round" stroke-linejoin="round" ><path d="M1 12s4-8 11-8 11 8 11 8-4 8-11 8-11-8-11-8z"/><circle cx="12" cy="12" r="3.300"/></g></svg>
<span style="position:absolute;top:332px;font-size:16px;line-height:17px;height:17px;font-weight:400;color:#555c64;white-space:pre;left:287.40px;letter-spacing:-0.216px;">Summer Collection</span>
<svg style="position:absolute;left:539px;top:321px" width="38" height="37.5" viewBox="0 0 38 38" preserveAspectRatio="none"><rect width="38" height="38" fill="#e6eef4"/>
<path d="M14.5 2.3L18.6 5.4 18 8 20 10 21 15.200 19.400 16.600 17.600 12.800 16.600 18 14.200 24.200 5.300 20.400 7.400 13.800 2.400 18.400 .800 16.200 6 9.500 8.600 7.600 11.200 6.600z" fill="#d5e6f0" stroke="#a3c0cf" stroke-width=".600" stroke-linejoin="round"/>
<path d="M11.200 6.600Q14.500 9.600 18 8" fill="none" stroke="#a3c0cf" stroke-width=".600"/>
<path d="M23 12C22.400 5 25 1 30 1.200 34.500 1.400 36.600 5 35.600 13.800z" fill="#a9d6e2" stroke="#80b7c6" stroke-width=".600"/>
<path d="M23.100 9.300L35.900 11.200" fill="none" stroke="#80b7c6" stroke-width=".600"/>
<path d="M22.500 19L26.500 16.800 29.500 19.800 33.800 16.600 37.400 21 34.400 23.400 37.400 32 27.400 35.800 23.400 26.200 20.200 28.200 17.400 24.400z" fill="#92dcc0" stroke="#6cbf9f" stroke-width=".600" stroke-linejoin="round"/>
<path d="M26.500 16.800L29.800 22.200 33.800 16.600" fill="none" stroke="#6cbf9f" stroke-width=".600"/>
<rect x="10.800" y="12" width="3.200" height="3.400" rx="1.200" fill="#e9ad55"/><rect x="26.900" y="9.600" width="3" height="3" rx="1.200" fill="#e9ad55"/><rect x="26.500" y="23" width="3.300" height="3.500" rx="1.300" fill="#e9ad55"/></svg>
<div style="position:absolute;left:673.2px;top:318.3px;width:39.7px;height:42.8px;background:#fff;border:1px solid #8a8d91;border-radius:6px;"></div>
<svg style="position:absolute;left:684.00px;top:330.80px" width="18" height="17.500" viewBox="0 0 18 17.500"><path fill="#8a8a8a" d="M12.400.600a1.200 1.200 0 0 1 1.700 0l3 3a1.200 1.200 0 0 1 0 1.700L15.600 6.800 10.900 2.100zM10 3l4.700 4.700-8.600 8.600-5.600 1 .900-5.700z"/><path stroke="#fff" stroke-width="1.100" d="M4.200 12.300l7.300-7.300M5.900 14l7.300-7.300" fill="none"/></svg>
<div style="position:absolute;left:818.1px;top:318.3px;width:39.7px;height:42.8px;background:#fff;border:1px solid #8a8d91;border-radius:6px;"></div>
<svg style="position:absolute;left:828.90px;top:330.80px" width="18" height="17.500" viewBox="0 0 18 17.500"><path fill="#8a8a8a" d="M12.400.600a1.200 1.200 0 0 1 1.700 0l3 3a1.200 1.200 0 0 1 0 1.700L15.600 6.800 10.900 2.100zM10 3l4.700 4.700-8.600 8.600-5.600 1 .900-5.700z"/><path stroke="#fff" stroke-width="1.100" d="M4.200 12.300l7.300-7.300M5.900 14l7.300-7.300" fill="none"/></svg>
<div style="position:absolute;left:1033.1px;top:321.2px;width:222px;height:36.8px;background:#fff;border:1px solid #72767b;border-radius:5px;"></div>
<span style="position:absolute;top:330px;font-size:17.5px;line-height:20px;height:20px;font-weight:400;color:#32373c;white-space:pre;left:1036.30px;letter-spacing:0.090px;">Simple product</span>
<svg style="position:absolute;left:1230.10px;top:335.95px;overflow:visible" width="13.40" height="8.00" viewBox="2.8 6.8 18.4 10.399999999999999" preserveAspectRatio="none"><g fill="none" stroke="#32373c" stroke-width="2.6" stroke-linecap="round" stroke-linejoin="round" stroke-linecap="butt" stroke-linejoin="miter"><path d="M4 8l8 8 8-8"/></g></svg>
<div style="position:absolute;left:1356px;top:319.9px;width:299.5px;height:40.3px;background:#fff;border:2px solid #1b6bb1;border-radius:6px;"></div>
<span style="position:absolute;top:332px;font-size:16px;line-height:17px;height:17px;font-weight:400;color:#555c64;white-space:pre;left:1368.80px;letter-spacing:-0.897px;">50</span>
<div style="position:absolute;left:1386.2px;top:328.15px;width:1px;height:22.6px;background:#222;"></div>
<div style="position:absolute;left:1624.9px;top:328.15px;width:11px;height:21.8px;background:#efefef;"></div>
<svg style="position:absolute;left:1629.800px;top:332.05px" width="6" height="14" viewBox="0 0 6 14"><path d="M0 5L6 0v5zM0 9h6v5z" fill="#444"/></svg>
<svg style="position:absolute;left:1635px;top:319.85px" width="25" height="38.200" viewBox="0 0 25 38.200"><rect width="25" height="38.200" rx="3.500" fill="#1e1e1e"/><rect x="2.400" y="2.800" width="20.500" height="8.600" rx="1" fill="#555"/>
<circle cx="4.800" cy="16.900" r="2.700" fill="#f4f4f4"/><circle cx="12.300" cy="16.900" r="2.700" fill="#f0f0f0"/><circle cx="19.900" cy="16.900" r="3" fill="#f5a800"/>
<circle cx="4.800" cy="24.700" r="2.700" fill="#f4f4f4"/><circle cx="12.300" cy="24.700" r="2.700" fill="#f0f0f0"/><circle cx="19.900" cy="24.700" r="3" fill="#f5a800"/>
<rect x="2.300" y="30.400" width="12.900" height="5.200" rx="2.600" fill="#f4f4f4"/><circle cx="19.900" cy="33" r="3" fill="#f5a800"/></svg>
<div style="position:absolute;left:47px;top:376.1px;width:19.6px;height:19.6px;background:#fff;border:1px solid #8c8f94;border-radius:4.500px;box-shadow:inset 0 1px 2px rgba(0,0,0,.1);"></div>
<svg style="position:absolute;left:49.500px;top:377.60px" width="15" height="16" viewBox="0 0 15 16"><path d="M2.300 8l3.600 4.300L12.600 2.700" fill="none" stroke="#3080cc" stroke-width="3.100"/></svg>
<span style="position:absolute;top:378px;font-size:15.5px;line-height:17px;height:17px;font-weight:400;color:#555c64;white-space:pre;left:72.70px;letter-spacing:-0.428px;">1306</span>
<svg style="position:absolute;left:155.9px;top:380.70px" width="15.3" height="15.2" viewBox="0 0 15.3 15.2"><path fill="#1e8cf0" fill-rule="evenodd" d="M.2 15 1.100 10.600 8.890 2.810 12.290 6.210 4.500 14zM3.660 10.380 9.170 4.870 10.230 5.930 4.720 11.440z"/><path fill="#1e8cf0" d="M9.600 2.200l1.060-1.060a2.350 2.350 0 0 1 3.320 3.320l-1.060 1.060z"/></svg>
<svg style="position:absolute;left:178.5px;top:381.40px" width="12.6" height="14.6" viewBox="0 0 12.6 14.6"><g fill="none" stroke="#c9284b" stroke-width="1.250" stroke-linecap="round" stroke-linejoin="round"><path d="M.600 3.700H12M3.600 3.700V2.700a1.200 1.200 0 0 1 1.200-1.200h3a1.200 1.200 0 0 1 1.200 1.200V3.700M1.900 3.700v8.700a1.500 1.500 0 0 0 1.500 1.500h5.800a1.500 1.500 0 0 0 1.500-1.500V3.700"/><path d="M4.950 6.400v4.100M7.600 6.400v4.100" stroke-width="1.100"/></g></svg>
<svg style="position:absolute;left:198.80px;top:379.00px;overflow:visible" width="23.90" height="17.50" viewBox="0 3 24 18" preserveAspectRatio="none"><g fill="none" stroke="#1e8cf0" stroke-width="1.9" stroke-linecap="round" stroke-linejoin="round" ><path d="M1 12s4-8 11-8 11 8 11 8-4 8-11 8-11-8-11-8z"/><circle cx="12" cy="12" r="3.300"/></g></svg>
<span style="position:absolute;top:381px;font-size:16px;line-height:17px;height:17px;font-weight:400;color:#555c64;white-space:pre;left:287.40px;letter-spacing:-0.331px;">Shirt Green</span>
<svg style="position:absolute;left:539px;top:370px" width="38" height="37.5" viewBox="0 0 38 38" preserveAspectRatio="none"><rect width="38" height="38" fill="#e7eef4"/>
<path d="M14.500 9.200Q18.500 11.200 22.500 8.200L30.600 10.400 28.800 15.800 26.200 14.600 28.200 29.200Q20.500 30.500 13.200 29.600L12.800 16.600 9.400 18 7.100 14.400z" fill="#e3e3e3" stroke="#a9a9a9" stroke-width=".700" stroke-linejoin="round"/>
<path d="M14.500 9.200Q18.500 12.600 22.500 8.200" fill="none" stroke="#b0b0b0" stroke-width="1"/>
<path d="M14 23.500q3 1 6.500.300M13.600 28.300q7 1.100 14.300-.100" fill="none" stroke="#cfcfcf" stroke-width=".600"/></svg>
<div style="position:absolute;left:673.2px;top:367.1px;width:39.7px;height:42.8px;background:#fff;border:1px solid #8a8d91;border-radius:6px;"></div>
<svg style="position:absolute;left:684.00px;top:379.60px" width="18" height="17.500" viewBox="0 0 18 17.500"><path fill="#8a8a8a" d="M12.400.600a1.200 1.200 0 0 1 1.700 0l3 3a1.200 1.200 0 0 1 0 1.700L15.600 6.800 10.900 2.100zM10 3l4.700 4.700-8.600 8.600-5.600 1 .900-5.700z"/><path stroke="#fff" stroke-width="1.100" d="M4.200 12.300l7.300-7.300M5.900 14l7.300-7.300" fill="none"/></svg>
<div style="position:absolute;left:818.1px;top:367.1px;width:39.7px;height:42.8px;background:#fff;border:1px solid #8a8d91;border-radius:6px;"></div>
<svg style="position:absolute;left:828.90px;top:379.60px" width="18" height="17.500" viewBox="0 0 18 17.500"><path fill="#8a8a8a" d="M12.400.600a1.200 1.200 0 0 1 1.700 0l3 3a1.200 1.200 0 0 1 0 1.700L15.600 6.800 10.900 2.100zM10 3l4.700 4.700-8.600 8.600-5.600 1 .900-5.700z"/><path stroke="#fff" stroke-width="1.100" d="M4.200 12.300l7.300-7.300M5.900 14l7.300-7.300" fill="none"/></svg>
<div style="position:absolute;left:1033.1px;top:370.0px;width:222px;height:36.8px;background:#fff;border:1px solid #72767b;border-radius:5px;"></div>
<span style="position:absolute;top:379px;font-size:17.5px;line-height:20px;height:20px;font-weight:400;color:#32373c;white-space:pre;left:1036.30px;letter-spacing:0.090px;">Simple product</span>
<svg style="position:absolute;left:1230.10px;top:384.70px;overflow:visible" width="13.40" height="8.00" viewBox="2.8 6.8 18.4 10.399999999999999" preserveAspectRatio="none"><g fill="none" stroke="#32373c" stroke-width="2.6" stroke-linecap="round" stroke-linejoin="round" stroke-linecap="butt" stroke-linejoin="miter"><path d="M4 8l8 8 8-8"/></g></svg>
<span style="position:absolute;top:381px;font-size:16px;line-height:17px;height:17px;font-weight:400;color:#555c64;white-space:pre;left:1355.80px;letter-spacing:-0.487px;">75.00</span>
<div style="position:absolute;left:47px;top:424.8px;width:19.6px;height:19.6px;background:#fff;border:1px solid #8c8f94;border-radius:4.500px;box-shadow:inset 0 1px 2px rgba(0,0,0,.1);"></div>
<svg style="position:absolute;left:49.500px;top:426.35px" width="15" height="16" viewBox="0 0 15 16"><path d="M2.300 8l3.600 4.300L12.600 2.700" fill="none" stroke="#3080cc" stroke-width="3.100"/></svg>
<span style="position:absolute;top:427px;font-size:15.5px;line-height:17px;height:17px;font-weight:400;color:#555c64;white-space:pre;left:72.70px;letter-spacing:-0.428px;">2238</span>
<svg style="position:absolute;left:155.9px;top:429.45px" width="15.3" height="15.2" viewBox="0 0 15.3 15.2"><path fill="#1e8cf0" fill-rule="evenodd" d="M.2 15 1.100 10.600 8.890 2.810 12.290 6.210 4.500 14zM3.660 10.380 9.170 4.870 10.230 5.930 4.720 11.440z"/><path fill="#1e8cf0" d="M9.600 2.200l1.060-1.060a2.350 2.350 0 0 1 3.320 3.320l-1.060 1.060z"/></svg>
<svg style="position:absolute;left:178.5px;top:430.15px" width="12.6" height="14.6" viewBox="0 0 12.6 14.6"><g fill="none" stroke="#c9284b" stroke-width="1.250" stroke-linecap="round" stroke-linejoin="round"><path d="M.600 3.700H12M3.600 3.700V2.700a1.200 1.200 0 0 1 1.200-1.200h3a1.200 1.200 0 0 1 1.200 1.200V3.700M1.900 3.700v8.700a1.500 1.500 0 0 0 1.500 1.500h5.800a1.500 1.500 0 0 0 1.500-1.500V3.700"/><path d="M4.950 6.400v4.100M7.600 6.400v4.100" stroke-width="1.100"/></g></svg>
<svg style="position:absolute;left:198.80px;top:427.75px;overflow:visible" width="23.90" height="17.50" viewBox="0 3 24 18" preserveAspectRatio="none"><g fill="none" stroke="#1e8cf0" stroke-width="1.9" stroke-linecap="round" stroke-linejoin="round" ><path d="M1 12s4-8 11-8 11 8 11 8-4 8-11 8-11-8-11-8z"/><circle cx="12" cy="12" r="3.300"/></g></svg>
<span style="position:absolute;top:429px;font-size:16px;line-height:17px;height:17px;font-weight:400;color:#555c64;white-space:pre;left:287.40px;letter-spacing:-0.394px;">Shirt Green w1</span>
<svg style="position:absolute;left:539px;top:419px" width="38" height="37.5" viewBox="0 0 38 38" preserveAspectRatio="none"><rect width="38" height="38" fill="#e7eef4"/>
<path d="M14.500 9.200Q18.500 11.200 22.500 8.200L30.600 10.400 28.800 15.800 26.200 14.600 28.200 29.200Q20.500 30.500 13.200 29.600L12.800 16.600 9.400 18 7.100 14.400z" fill="#e3e3e3" stroke="#a9a9a9" stroke-width=".700" stroke-linejoin="round"/>
<path d="M14.500 9.200Q18.500 12.600 22.500 8.200" fill="none" stroke="#b0b0b0" stroke-width="1"/>
<path d="M14 23.500q3 1 6.500.300M13.600 28.300q7 1.100 14.300-.100" fill="none" stroke="#cfcfcf" stroke-width=".600"/></svg>
<div style="position:absolute;left:673.2px;top:415.8px;width:39.7px;height:42.8px;background:#fff;border:1px solid #8a8d91;border-radius:6px;"></div>
<svg style="position:absolute;left:684.00px;top:428.30px" width="18" height="17.500" viewBox="0 0 18 17.500"><path fill="#8a8a8a" d="M12.400.600a1.200 1.200 0 0 1 1.700 0l3 3a1.200 1.200 0 0 1 0 1.700L15.600 6.800 10.900 2.100zM10 3l4.700 4.700-8.600 8.600-5.600 1 .900-5.700z"/><path stroke="#fff" stroke-width="1.100" d="M4.200 12.300l7.300-7.300M5.900 14l7.300-7.300" fill="none"/></svg>
<div style="position:absolute;left:818.1px;top:415.8px;width:39.7px;height:42.8px;background:#fff;border:1px solid #8a8d91;border-radius:6px;"></div>
<svg style="position:absolute;left:828.90px;top:428.30px" width="18" height="17.500" viewBox="0 0 18 17.500"><path fill="#8a8a8a" d="M12.400.600a1.200 1.200 0 0 1 1.700 0l3 3a1.200 1.200 0 0 1 0 1.700L15.600 6.800 10.900 2.100zM10 3l4.700 4.700-8.600 8.600-5.600 1 .900-5.700z"/><path stroke="#fff" stroke-width="1.100" d="M4.200 12.300l7.300-7.300M5.900 14l7.300-7.300" fill="none"/></svg>
<div style="position:absolute;left:1033.1px;top:418.8px;width:222px;height:36.8px;background:#fff;border:1px solid #72767b;border-radius:5px;"></div>
<span style="position:absolute;top:428px;font-size:17.5px;line-height:20px;height:20px;font-weight:400;color:#32373c;white-space:pre;left:1036.30px;letter-spacing:0.090px;">Simple product</span>
<svg style="position:absolute;left:1230.10px;top:433.45px;overflow:visible" width="13.40" height="8.00" viewBox="2.8 6.8 18.4 10.399999999999999" preserveAspectRatio="none"><g fill="none" stroke="#32373c" stroke-width="2.6" stroke-linecap="round" stroke-linejoin="round" stroke-linecap="butt" stroke-linejoin="miter"><path d="M4 8l8 8 8-8"/></g></svg>
<span style="position:absolute;top:430px;font-size:16px;line-height:17px;height:17px;font-weight:400;color:#555c64;white-space:pre;left:1355.80px;letter-spacing:-0.487px;">10.00</span>
<div style="position:absolute;left:47px;top:473.6px;width:19.6px;height:19.6px;background:#fff;border:1px solid #8c8f94;border-radius:4.500px;box-shadow:inset 0 1px 2px rgba(0,0,0,.1);"></div>
<span style="position:absolute;top:475px;font-size:15.5px;line-height:17px;height:17px;font-weight:400;color:#555c64;white-space:pre;left:72.70px;letter-spacing:-0.428px;">2236</span>
<svg style="position:absolute;left:155.9px;top:478.20px" width="15.3" height="15.2" viewBox="0 0 15.3 15.2"><path fill="#1e8cf0" fill-rule="evenodd" d="M.2 15 1.100 10.600 8.890 2.810 12.290 6.210 4.500 14zM3.660 10.380 9.170 4.870 10.230 5.930 4.720 11.440z"/><path fill="#1e8cf0" d="M9.600 2.200l1.060-1.060a2.350 2.350 0 0 1 3.320 3.320l-1.060 1.060z"/></svg>
<svg style="position:absolute;left:178.5px;top:478.90px" width="12.6" height="14.6" viewBox="0 0 12.6 14.6"><g fill="none" stroke="#c9284b" stroke-width="1.250" stroke-linecap="round" stroke-linejoin="round"><path d="M.600 3.700H12M3.600 3.700V2.700a1.200 1.200 0 0 1 1.200-1.200h3a1.200 1.200 0 0 1 1.200 1.200V3.700M1.900 3.700v8.700a1.500 1.500 0 0 0 1.500 1.500h5.800a1.500 1.500 0 0 0 1.500-1.500V3.700"/><path d="M4.950 6.400v4.100M7.600 6.400v4.100" stroke-width="1.100"/></g></svg>
<svg style="position:absolute;left:198.80px;top:476.50px;overflow:visible" width="23.90" height="17.50" viewBox="0 3 24 18" preserveAspectRatio="none"><g fill="none" stroke="#1e8cf0" stroke-width="1.9" stroke-linecap="round" stroke-linejoin="round" ><path d="M1 12s4-8 11-8 11 8 11 8-4 8-11 8-11-8-11-8z"/><circle cx="12" cy="12" r="3.300"/></g></svg>
<span style="position:absolute;top:478px;font-size:16px;line-height:17px;height:17px;font-weight:400;color:#555c64;white-space:pre;left:287.40px;letter-spacing:-0.331px;">Shirt Green</span>
<svg style="position:absolute;left:539px;top:467px" width="38" height="37.5" viewBox="0 0 38 38" preserveAspectRatio="none"><rect width="38" height="38" fill="#e7eef4"/>
<path d="M14.500 9.200Q18.500 11.200 22.500 8.200L30.600 10.400 28.800 15.800 26.200 14.600 28.200 29.200Q20.500 30.500 13.200 29.600L12.800 16.600 9.400 18 7.100 14.400z" fill="#e3e3e3" stroke="#a9a9a9" stroke-width=".700" stroke-linejoin="round"/>
<path d="M14.500 9.200Q18.500 12.600 22.500 8.200" fill="none" stroke="#b0b0b0" stroke-width="1"/>
<path d="M14 23.500q3 1 6.500.300M13.600 28.300q7 1.100 14.300-.100" fill="none" stroke="#cfcfcf" stroke-width=".600"/></svg>
<div style="position:absolute;left:673.2px;top:464.6px;width:39.7px;height:42.8px;background:#fff;border:1px solid #8a8d91;border-radius:6px;"></div>
<svg style="position:absolute;left:684.00px;top:477.10px" width="18" height="17.500" viewBox="0 0 18 17.500"><path fill="#8a8a8a" d="M12.400.600a1.200 1.200 0 0 1 1.700 0l3 3a1.200 1.200 0 0 1 0 1.700L15.600 6.800 10.900 2.100zM10 3l4.700 4.700-8.600 8.600-5.600 1 .900-5.700z"/><path stroke="#fff" stroke-width="1.100" d="M4.200 12.300l7.300-7.300M5.900 14l7.300-7.300" fill="none"/></svg>
<div style="position:absolute;left:818.1px;top:464.6px;width:39.7px;height:42.8px;background:#fff;border:1px solid #8a8d91;border-radius:6px;"></div>
<svg style="position:absolute;left:828.90px;top:477.10px" width="18" height="17.500" viewBox="0 0 18 17.500"><path fill="#8a8a8a" d="M12.400.600a1.200 1.200 0 0 1 1.700 0l3 3a1.200 1.200 0 0 1 0 1.700L15.600 6.800 10.900 2.100zM10 3l4.700 4.700-8.600 8.600-5.600 1 .900-5.700z"/><path stroke="#fff" stroke-width="1.100" d="M4.200 12.300l7.300-7.300M5.900 14l7.300-7.300" fill="none"/></svg>
<div style="position:absolute;left:1033.1px;top:467.5px;width:222px;height:36.8px;background:#fff;border:1px solid #72767b;border-radius:5px;"></div>
<span style="position:absolute;top:476px;font-size:17.5px;line-height:20px;height:20px;font-weight:400;color:#32373c;white-space:pre;left:1036.30px;letter-spacing:0.137px;">Variable product</span>
<svg style="position:absolute;left:1230.10px;top:482.20px;overflow:visible" width="13.40" height="8.00" viewBox="2.8 6.8 18.4 10.399999999999999" preserveAspectRatio="none"><g fill="none" stroke="#32373c" stroke-width="2.6" stroke-linecap="round" stroke-linejoin="round" stroke-linecap="butt" stroke-linejoin="miter"><path d="M4 8l8 8 8-8"/></g></svg>
<svg style="position:absolute;left:1356.400px;top:476.30px" width="24" height="23.600" viewBox="0 0 24 24"><circle cx="12" cy="12" r="10.600" fill="none" stroke="#3a3a3a" stroke-width="1.900"/><path d="M4.600 4.600l14.800 14.800" stroke="#3a3a3a" stroke-width="1.900"/></svg>
<div style="position:absolute;left:47px;top:522.4px;width:19.6px;height:19.6px;background:#fff;border:1px solid #8c8f94;border-radius:4.500px;box-shadow:inset 0 1px 2px rgba(0,0,0,.1);"></div>
<span style="position:absolute;top:524px;font-size:15.5px;line-height:17px;height:17px;font-weight:400;color:#555c64;white-space:pre;left:72.70px;letter-spacing:-0.428px;">2186</span>
<svg style="position:absolute;left:155.9px;top:526.95px" width="15.3" height="15.2" viewBox="0 0 15.3 15.2"><path fill="#1e8cf0" fill-rule="evenodd" d="M.2 15 1.100 10.600 8.890 2.810 12.290 6.210 4.500 14zM3.660 10.380 9.170 4.870 10.230 5.930 4.720 11.440z"/><path fill="#1e8cf0" d="M9.600 2.200l1.060-1.060a2.350 2.350 0 0 1 3.320 3.320l-1.060 1.060z"/></svg>
<svg style="position:absolute;left:178.5px;top:527.65px" width="12.6" height="14.6" viewBox="0 0 12.6 14.6"><g fill="none" stroke="#c9284b" stroke-width="1.250" stroke-linecap="round" stroke-linejoin="round"><path d="M.600 3.700H12M3.600 3.700V2.700a1.200 1.200 0 0 1 1.200-1.200h3a1.200 1.200 0 0 1 1.200 1.200V3.700M1.900 3.700v8.700a1.500 1.500 0 0 0 1.500 1.500h5.800a1.500 1.500 0 0 0 1.500-1.500V3.700"/><path d="M4.950 6.400v4.100M7.600 6.400v4.100" stroke-width="1.100"/></g></svg>
<svg style="position:absolute;left:198.80px;top:525.25px;overflow:visible" width="23.90" height="17.50" viewBox="0 3 24 18" preserveAspectRatio="none"><g fill="none" stroke="#1e8cf0" stroke-width="1.9" stroke-linecap="round" stroke-linejoin="round" ><path d="M1 12s4-8 11-8 11 8 11 8-4 8-11 8-11-8-11-8z"/><circle cx="12" cy="12" r="3.300"/></g></svg>
<span style="position:absolute;top:527px;font-size:16px;line-height:17px;height:17px;font-weight:400;color:#555c64;white-space:pre;left:287.40px;letter-spacing:-0.216px;">Summer Collection</span>
<svg style="position:absolute;left:539px;top:516px" width="38" height="37.5" viewBox="0 0 38 38" preserveAspectRatio="none"><rect width="38" height="38" fill="#e6eef4"/>
<path d="M14.5 2.3L18.6 5.4 18 8 20 10 21 15.200 19.400 16.600 17.600 12.800 16.600 18 14.200 24.200 5.300 20.400 7.400 13.800 2.400 18.400 .800 16.200 6 9.500 8.600 7.600 11.200 6.600z" fill="#d5e6f0" stroke="#a3c0cf" stroke-width=".600" stroke-linejoin="round"/>
<path d="M11.200 6.600Q14.500 9.600 18 8" fill="none" stroke="#a3c0cf" stroke-width=".600"/>
<path d="M23 12C22.400 5 25 1 30 1.200 34.500 1.400 36.600 5 35.600 13.800z" fill="#a9d6e2" stroke="#80b7c6" stroke-width=".600"/>
<path d="M23.100 9.300L35.900 11.200" fill="none" stroke="#80b7c6" stroke-width=".600"/>
<path d="M22.500 19L26.500 16.800 29.500 19.800 33.800 16.600 37.400 21 34.400 23.400 37.400 32 27.400 35.800 23.400 26.200 20.200 28.200 17.400 24.400z" fill="#92dcc0" stroke="#6cbf9f" stroke-width=".600" stroke-linejoin="round"/>
<path d="M26.500 16.800L29.800 22.200 33.800 16.600" fill="none" stroke="#6cbf9f" stroke-width=".600"/>
<rect x="10.800" y="12" width="3.200" height="3.400" rx="1.200" fill="#e9ad55"/><rect x="26.900" y="9.600" width="3" height="3" rx="1.200" fill="#e9ad55"/><rect x="26.500" y="23" width="3.300" height="3.500" rx="1.300" fill="#e9ad55"/></svg>
<div style="position:absolute;left:673.2px;top:513.4px;width:39.7px;height:42.8px;background:#fff;border:1px solid #8a8d91;border-radius:6px;"></div>
<svg style="position:absolute;left:684.00px;top:525.90px" width="18" height="17.500" viewBox="0 0 18 17.500"><path fill="#8a8a8a" d="M12.400.600a1.200 1.200 0 0 1 1.700 0l3 3a1.200 1.200 0 0 1 0 1.700L15.600 6.800 10.900 2.100zM10 3l4.700 4.700-8.600 8.600-5.600 1 .900-5.700z"/><path stroke="#fff" stroke-width="1.100" d="M4.200 12.300l7.300-7.300M5.900 14l7.300-7.300" fill="none"/></svg>
<div style="position:absolute;left:818.1px;top:513.4px;width:39.7px;height:42.8px;background:#fff;border:1px solid #8a8d91;border-radius:6px;"></div>
<svg style="position:absolute;left:828.90px;top:525.90px" width="18" height="17.500" viewBox="0 0 18 17.500"><path fill="#8a8a8a" d="M12.400.600a1.200 1.200 0 0 1 1.700 0l3 3a1.200 1.200 0 0 1 0 1.700L15.600 6.800 10.900 2.100zM10 3l4.700 4.700-8.600 8.600-5.600 1 .900-5.700z"/><path stroke="#fff" stroke-width="1.100" d="M4.200 12.300l7.300-7.300M5.900 14l7.300-7.300" fill="none"/></svg>
<div style="position:absolute;left:1033.1px;top:516.2px;width:222px;height:36.8px;background:#fff;border:1px solid #72767b;border-radius:5px;"></div>
<span style="position:absolute;top:525px;font-size:17.5px;line-height:20px;height:20px;font-weight:400;color:#32373c;white-space:pre;left:1036.30px;letter-spacing:0.090px;">Simple product</span>
<svg style="position:absolute;left:1230.10px;top:530.95px;overflow:visible" width="13.40" height="8.00" viewBox="2.8 6.8 18.4 10.399999999999999" preserveAspectRatio="none"><g fill="none" stroke="#32373c" stroke-width="2.6" stroke-linecap="round" stroke-linejoin="round" stroke-linecap="butt" stroke-linejoin="miter"><path d="M4 8l8 8 8-8"/></g></svg>
<span style="position:absolute;top:527px;font-size:16px;line-height:17px;height:17px;font-weight:400;color:#555c64;white-space:pre;left:1355.80px;letter-spacing:-0.487px;">40.00</span>
<div style="position:absolute;left:47px;top:571.1px;width:19.6px;height:19.6px;background:#fff;border:1px solid #8c8f94;border-radius:4.500px;box-shadow:inset 0 1px 2px rgba(0,0,0,.1);"></div>
<span style="position:absolute;top:573px;font-size:15.5px;line-height:17px;height:17px;font-weight:400;color:#555c64;white-space:pre;left:72.70px;letter-spacing:-0.428px;">2161</span>
<svg style="position:absolute;left:155.9px;top:575.70px" width="15.3" height="15.2" viewBox="0 0 15.3 15.2"><path fill="#1e8cf0" fill-rule="evenodd" d="M.2 15 1.100 10.600 8.890 2.810 12.290 6.210 4.500 14zM3.660 10.380 9.170 4.870 10.230 5.930 4.720 11.440z"/><path fill="#1e8cf0" d="M9.600 2.200l1.060-1.060a2.350 2.350 0 0 1 3.320 3.320l-1.060 1.060z"/></svg>
<svg style="position:absolute;left:178.5px;top:576.40px" width="12.6" height="14.6" viewBox="0 0 12.6 14.6"><g fill="none" stroke="#c9284b" stroke-width="1.250" stroke-linecap="round" stroke-linejoin="round"><path d="M.600 3.700H12M3.600 3.700V2.700a1.200 1.200 0 0 1 1.200-1.200h3a1.200 1.200 0 0 1 1.200 1.200V3.700M1.900 3.700v8.700a1.500 1.500 0 0 0 1.500 1.500h5.800a1.500 1.500 0 0 0 1.500-1.500V3.700"/><path d="M4.950 6.400v4.100M7.600 6.400v4.100" stroke-width="1.100"/></g></svg>
<svg style="position:absolute;left:198.80px;top:574.00px;overflow:visible" width="23.90" height="17.50" viewBox="0 3 24 18" preserveAspectRatio="none"><g fill="none" stroke="#1e8cf0" stroke-width="1.9" stroke-linecap="round" stroke-linejoin="round" ><path d="M1 12s4-8 11-8 11 8 11 8-4 8-11 8-11-8-11-8z"/><circle cx="12" cy="12" r="3.300"/></g></svg>
<span style="position:absolute;top:576px;font-size:16px;line-height:17px;height:17px;font-weight:400;color:#555c64;white-space:pre;left:287.40px;letter-spacing:-0.216px;">Summer Collection</span>
<svg style="position:absolute;left:539px;top:565px" width="38" height="37.5" viewBox="0 0 38 38" preserveAspectRatio="none"><rect width="38" height="38" fill="#e6eef4"/>
<path d="M14.5 2.3L18.6 5.4 18 8 20 10 21 15.200 19.400 16.600 17.600 12.800 16.600 18 14.200 24.200 5.300 20.400 7.400 13.800 2.400 18.400 .800 16.200 6 9.500 8.600 7.600 11.200 6.600z" fill="#d5e6f0" stroke="#a3c0cf" stroke-width=".600" stroke-linejoin="round"/>
<path d="M11.200 6.600Q14.500 9.600 18 8" fill="none" stroke="#a3c0cf" stroke-width=".600"/>
<path d="M23 12C22.400 5 25 1 30 1.200 34.500 1.400 36.600 5 35.600 13.800z" fill="#a9d6e2" stroke="#80b7c6" stroke-width=".600"/>
<path d="M23.100 9.300L35.900 11.200" fill="none" stroke="#80b7c6" stroke-width=".600"/>
<path d="M22.500 19L26.500 16.800 29.500 19.800 33.800 16.600 37.400 21 34.400 23.400 37.400 32 27.400 35.800 23.400 26.200 20.200 28.200 17.400 24.400z" fill="#92dcc0" stroke="#6cbf9f" stroke-width=".600" stroke-linejoin="round"/>
<path d="M26.500 16.800L29.800 22.200 33.800 16.600" fill="none" stroke="#6cbf9f" stroke-width=".600"/>
<rect x="10.800" y="12" width="3.200" height="3.400" rx="1.200" fill="#e9ad55"/><rect x="26.900" y="9.600" width="3" height="3" rx="1.200" fill="#e9ad55"/><rect x="26.500" y="23" width="3.300" height="3.500" rx="1.300" fill="#e9ad55"/></svg>
<div style="position:absolute;left:673.2px;top:562.1px;width:39.7px;height:42.8px;background:#fff;border:1px solid #8a8d91;border-radius:6px;"></div>
<svg style="position:absolute;left:684.00px;top:574.60px" width="18" height="17.500" viewBox="0 0 18 17.500"><path fill="#8a8a8a" d="M12.400.600a1.200 1.200 0 0 1 1.700 0l3 3a1.200 1.200 0 0 1 0 1.700L15.600 6.800 10.900 2.100zM10 3l4.700 4.700-8.600 8.600-5.600 1 .900-5.700z"/><path stroke="#fff" stroke-width="1.100" d="M4.200 12.300l7.300-7.300M5.900 14l7.300-7.300" fill="none"/></svg>
<div style="position:absolute;left:818.1px;top:562.1px;width:39.7px;height:42.8px;background:#fff;border:1px solid #8a8d91;border-radius:6px;"></div>
<svg style="position:absolute;left:828.90px;top:574.60px" width="18" height="17.500" viewBox="0 0 18 17.500"><path fill="#8a8a8a" d="M12.400.600a1.200 1.200 0 0 1 1.700 0l3 3a1.200 1.200 0 0 1 0 1.700L15.600 6.800 10.900 2.100zM10 3l4.700 4.700-8.600 8.600-5.600 1 .900-5.700z"/><path stroke="#fff" stroke-width="1.100" d="M4.200 12.300l7.300-7.300M5.900 14l7.300-7.300" fill="none"/></svg>
<div style="position:absolute;left:1033.1px;top:565.0px;width:222px;height:36.8px;background:#fff;border:1px solid #72767b;border-radius:5px;"></div>
<span style="position:absolute;top:574px;font-size:17.5px;line-height:20px;height:20px;font-weight:400;color:#32373c;white-space:pre;left:1036.30px;letter-spacing:0.137px;">Variable product</span>
<svg style="position:absolute;left:1230.10px;top:579.70px;overflow:visible" width="13.40" height="8.00" viewBox="2.8 6.8 18.4 10.399999999999999" preserveAspectRatio="none"><g fill="none" stroke="#32373c" stroke-width="2.6" stroke-linecap="round" stroke-linejoin="round" stroke-linecap="butt" stroke-linejoin="miter"><path d="M4 8l8 8 8-8"/></g></svg>
<svg style="position:absolute;left:1356.400px;top:573.80px" width="24" height="23.600" viewBox="0 0 24 24"><circle cx="12" cy="12" r="10.600" fill="none" stroke="#3a3a3a" stroke-width="1.900"/><path d="M4.600 4.600l14.800 14.800" stroke="#3a3a3a" stroke-width="1.900"/></svg>
<div style="position:absolute;left:47px;top:619.9px;width:19.6px;height:19.6px;background:#fff;border:1px solid #8c8f94;border-radius:4.500px;box-shadow:inset 0 1px 2px rgba(0,0,0,.1);"></div>
<span style="position:absolute;top:622px;font-size:15.5px;line-height:17px;height:17px;font-weight:400;color:#555c64;white-space:pre;left:72.70px;letter-spacing:-0.428px;">1304</span>
<svg style="position:absolute;left:155.9px;top:624.45px" width="15.3" height="15.2" viewBox="0 0 15.3 15.2"><path fill="#1e8cf0" fill-rule="evenodd" d="M.2 15 1.100 10.600 8.890 2.810 12.290 6.210 4.500 14zM3.660 10.380 9.170 4.870 10.230 5.930 4.720 11.440z"/><path fill="#1e8cf0" d="M9.600 2.200l1.060-1.060a2.350 2.350 0 0 1 3.320 3.320l-1.060 1.060z"/></svg>
<svg style="position:absolute;left:178.5px;top:625.15px" width="12.6" height="14.6" viewBox="0 0 12.6 14.6"><g fill="none" stroke="#c9284b" stroke-width="1.250" stroke-linecap="round" stroke-linejoin="round"><path d="M.600 3.700H12M3.600 3.700V2.700a1.200 1.200 0 0 1 1.200-1.200h3a1.200 1.200 0 0 1 1.200 1.200V3.700M1.900 3.700v8.700a1.500 1.500 0 0 0 1.500 1.500h5.800a1.500 1.500 0 0 0 1.500-1.500V3.700"/><path d="M4.950 6.400v4.100M7.600 6.400v4.100" stroke-width="1.100"/></g></svg>
<svg style="position:absolute;left:198.80px;top:622.75px;overflow:visible" width="23.90" height="17.50" viewBox="0 3 24 18" preserveAspectRatio="none"><g fill="none" stroke="#1e8cf0" stroke-width="1.9" stroke-linecap="round" stroke-linejoin="round" ><path d="M1 12s4-8 11-8 11 8 11 8-4 8-11 8-11-8-11-8z"/><circle cx="12" cy="12" r="3.300"/></g></svg>
<span style="position:absolute;top:624px;font-size:16px;line-height:17px;height:17px;font-weight:400;color:#555c64;white-space:pre;left:287.40px;letter-spacing:-0.558px;">WordPress w1</span>
<svg style="position:absolute;left:551.80px;top:626.90px" width="13.400" height="13.200" viewBox="0 0 14 13"><rect width="14" height="13" rx="1" fill="#e3e5e8"/><path d="M0 13V8.500l3.500-3.500 4 4 2.500-2 4 3.500V13z" fill="#cfd2d6"/><circle cx="9.500" cy="4" r="1.300" fill="#c4c7cc"/></svg>
<div style="position:absolute;left:673.2px;top:610.9px;width:39.7px;height:42.8px;background:#fff;border:1px solid #8a8d91;border-radius:6px;"></div>
<svg style="position:absolute;left:684.00px;top:623.40px" width="18" height="17.500" viewBox="0 0 18 17.500"><path fill="#8a8a8a" d="M12.400.600a1.200 1.200 0 0 1 1.700 0l3 3a1.200 1.200 0 0 1 0 1.700L15.600 6.800 10.900 2.100zM10 3l4.700 4.700-8.600 8.600-5.600 1 .900-5.700z"/><path stroke="#fff" stroke-width="1.100" d="M4.200 12.300l7.300-7.300M5.900 14l7.300-7.300" fill="none"/></svg>
<div style="position:absolute;left:818.1px;top:610.9px;width:39.7px;height:42.8px;background:#fff;border:1px solid #8a8d91;border-radius:6px;"></div>
<svg style="position:absolute;left:828.90px;top:623.40px" width="18" height="17.500" viewBox="0 0 18 17.500"><path fill="#8a8a8a" d="M12.400.600a1.200 1.200 0 0 1 1.700 0l3 3a1.200 1.200 0 0 1 0 1.700L15.600 6.800 10.900 2.100zM10 3l4.700 4.700-8.600 8.600-5.600 1 .900-5.700z"/><path stroke="#fff" stroke-width="1.100" d="M4.200 12.300l7.300-7.300M5.900 14l7.300-7.300" fill="none"/></svg>
<div style="position:absolute;left:1033.1px;top:613.8px;width:222px;height:36.8px;background:#fff;border:1px solid #72767b;border-radius:5px;"></div>
<span style="position:absolute;top:623px;font-size:17.5px;line-height:20px;height:20px;font-weight:400;color:#32373c;white-space:pre;left:1036.30px;letter-spacing:0.090px;">Simple product</span>
<svg style="position:absolute;left:1230.10px;top:628.45px;overflow:visible" width="13.40" height="8.00" viewBox="2.8 6.8 18.4 10.399999999999999" preserveAspectRatio="none"><g fill="none" stroke="#32373c" stroke-width="2.6" stroke-linecap="round" stroke-linejoin="round" stroke-linecap="butt" stroke-linejoin="miter"><path d="M4 8l8 8 8-8"/></g></svg>
<span style="position:absolute;top:625px;font-size:16px;line-height:17px;height:17px;font-weight:400;color:#555c64;white-space:pre;left:1355.80px;letter-spacing:-0.487px;">35.00</span>
<svg style="position:absolute;left:1380px;top:330px" width="100" height="70" viewBox="1380 330 100 70"><path d="M1464.500 389.600L1408 355.500" stroke="#fb0007" stroke-width="3.700" stroke-linecap="round" fill="none"/><path d="M1394 346l20.400 4.600-7.400 10.400z" fill="#fb0007"/></svg>
<span style="position:absolute;top:666px;font-size:15.5px;line-height:17px;height:17px;font-weight:400;color:#444;white-space:pre;left:33.75px;letter-spacing:0.046px;">Showing 1 to 10 of 269 entries</span>
<span style="position:absolute;top:666px;font-size:15.5px;line-height:17px;height:17px;font-weight:400;color:#b9b9b9;white-space:pre;left:1478.75px;letter-spacing:-0.020px;">Created by iThemelandCo</span>
</div>
</body></html>
